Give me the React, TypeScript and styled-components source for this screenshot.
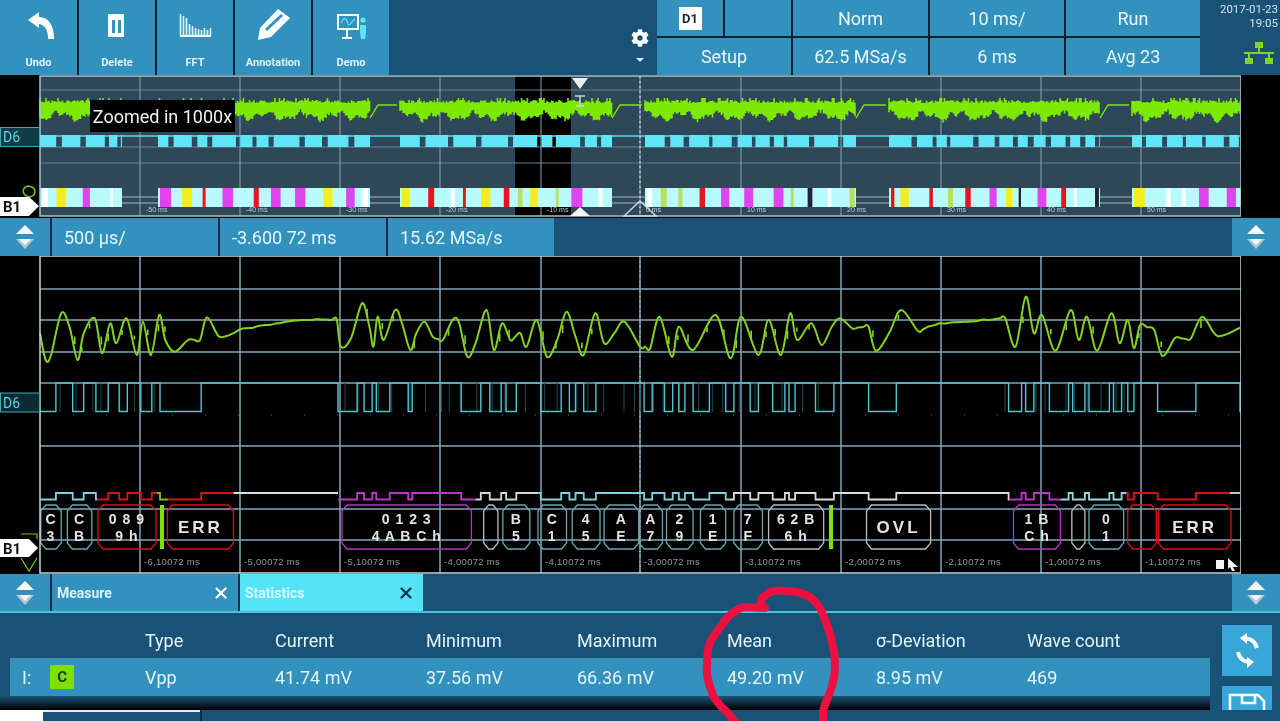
import React from "react";
import styled, { createGlobalStyle } from "styled-components";
import { FaCog } from "react-icons/fa";
import { X } from "lucide-react";

const BLUE = "#3391be";
const DARK = "#1a5277";
const CYAN = "#55e3f7";

const GlobalStyle = createGlobalStyle`
  html, body {
    margin: 0;
    padding: 0;
    background: #000;
  }
  body {
    font-family: "Roboto", "Liberation Sans", sans-serif;
  }
`;

const Page = styled.div`
  position: relative;
  width: 1280px;
  height: 721px;
  overflow: hidden;
  display: flex;
  flex-direction: column;
  background: #000;
  color: #e4f4fa;
  filter: blur(0.6px);
`;

/* top bar */
const TopBar = styled.header`
  height: 75px;
  display: flex;
  background: ${DARK};
`;

const ToolGroup = styled.div`
  display: flex;
  gap: 2px;
  background: #06202f;
`;

const ToolButton = styled.button`
  width: 76px;
  height: 75px;
  padding: 0;
  border: 0;
  display: flex;
  flex-direction: column;
  align-items: center;
  background: ${BLUE};
  color: #dff3fa;
  font-family: inherit;
  font-size: 11px;
  font-weight: 700;
  &:first-child {
    width: 77px;
  }
  svg {
    flex: none;
  }
  span {
    margin-top: 10px;
    line-height: 16px;
  }
`;

const GearArea = styled.div`
  flex: 1;
  display: flex;
  flex-direction: column;
  align-items: flex-end;
  padding: 29px 8px 0 0;
  color: #fff;
  font-size: 18px;
`;

const GearNotch = styled.i`
  display: block;
  margin: 11px 5px 0 0;
  border-left: 4px solid transparent;
  border-right: 4px solid transparent;
  border-top: 4px solid #d6e6ee;
`;

const ControlGrid = styled.div`
  flex: none;
  width: 543px;
  display: grid;
  grid-template-columns: 66px 66px 135px 134px 134px;
  grid-template-rows: 36px 37px;
  gap: 2px;
  background: #06202f;
`;

const ControlCell = styled.div<{ $span?: number }>`
  grid-column: span ${(p) => p.$span ?? 1};
  display: flex;
  align-items: center;
  justify-content: center;
  background: ${BLUE};
  font-size: 18px;
  color: #e8f6fb;
`;

const ChannelChip = styled.span`
  width: 23px;
  height: 23px;
  display: flex;
  align-items: center;
  justify-content: center;
  background: #fff;
  color: #1a2a33;
  font-size: 13px;
  font-weight: 700;
`;

const Clock = styled.div`
  flex: none;
  width: 78px;
  margin-left: 2px;
  box-sizing: border-box;
  display: flex;
  flex-direction: column;
  align-items: flex-end;
  padding: 2px 2px 0 0;
  font-size: 11.5px;
  line-height: 14px;
  color: #cfe4ee;
  svg {
    margin: 12px 3px 0 0;
  }
`;

/* plots */
const PlotRow = styled.section<{ $height: number }>`
  position: relative;
  height: ${(p) => p.$height}px;
  display: flex;
  background: #000;
  svg {
    display: block;
  }
`;

const ZoomTip = styled.div`
  position: absolute;
  left: 90px;
  top: 25px;
  width: 145px;
  height: 32px;
  display: flex;
  align-items: center;
  justify-content: center;
  background: #000;
  color: #f2f2f2;
  font-size: 18px;
  white-space: nowrap;
`;

const TraceLabel = styled.text`
  font-family: "Roboto", "Liberation Sans", sans-serif;
  font-size: 14px;
  fill: #58d4e4;
`;

const BusLabel = styled.text`
  font-family: "Roboto", "Liberation Sans", sans-serif;
  font-size: 15px;
  font-weight: 700;
  fill: #111;
`;

const TinyTime = styled.text`
  font-family: "Liberation Sans", sans-serif;
  font-size: 7px;
  fill: #c0d0d8;
`;

const TimeLabel = styled.text`
  font-family: "Liberation Sans", sans-serif;
  font-size: 9.5px;
  letter-spacing: 0.3px;
  fill: #8f9a9f;
`;

const FrameText = styled.text<{ $big?: boolean }>`
  font-family: "Liberation Sans", sans-serif;
  font-size: ${(p) => (p.$big ? 17 : 14)}px;
  font-weight: 700;
  letter-spacing: ${(p) => (p.$big ? 3 : 1)}px;
  text-anchor: middle;
  fill: #e4e4e4;
`;

/* bars between plots */
const StripBar = styled.div<{ $height: number }>`
  height: ${(p) => p.$height}px;
  display: flex;
  background: ${DARK};
`;

const ArrowCell = styled.div<{ $side?: "left" | "right" }>`
  width: ${(p) => (p.$side === "right" ? 48 : 50)}px;
  margin-left: ${(p) => (p.$side === "right" ? "auto" : 0)};
  display: flex;
  align-items: center;
  justify-content: center;
  background: ${BLUE};
`;

const TimeCell = styled.div`
  width: 166px;
  margin-left: 2px;
  padding-left: 12px;
  box-sizing: border-box;
  display: flex;
  align-items: center;
  background: ${BLUE};
  box-shadow: -2px 0 0 #0a2c40;
  font-size: 18px;
  color: #e4f4fa;
`;

const Tab = styled.div<{ $active?: boolean }>`
  width: ${(p) => (p.$active ? 183 : 186)}px;
  margin-left: 2px;
  padding: 0 8px 0 5px;
  box-sizing: border-box;
  display: flex;
  align-items: center;
  justify-content: space-between;
  background: ${(p) => (p.$active ? CYAN : BLUE)};
  box-shadow: -2px 0 0 #0a2c40;
  color: ${(p) => (p.$active ? "#d8fbff" : "#dcf2fa")};
  font-size: 14px;
  font-weight: 700;
  svg {
    color: ${(p) => (p.$active ? "#0c3550" : "#fff")};
  }
`;

/* statistics */
const StatsPanel = styled.section`
  height: 99px;
  display: flex;
  border-top: 2px solid #48c4dc;
  box-sizing: border-box;
  background: ${DARK};
`;

const StatsTable = styled.div`
  position: relative;
  width: 1210px;
  padding: 0 0 0 10px;
  box-sizing: border-box;
  &::after {
    content: "";
    position: absolute;
    left: 0;
    right: 0;
    bottom: 0;
    height: 14px;
    background: linear-gradient(#1a5277, #000);
  }
`;

const StatsRow = styled.div<{ $value?: boolean }>`
  height: ${(p) => (p.$value ? 38 : 45)}px;
  display: grid;
  grid-template-columns: 135px 130px 151px 151px 150px 149px 151px 183px;
  align-items: center;
  padding-top: ${(p) => (p.$value ? 0 : 9)}px;
  box-sizing: border-box;
  background: ${(p) => (p.$value ? BLUE : "transparent")};
  font-size: 18px;
  color: #e4f4fa;
`;

const RowKey = styled.div`
  display: flex;
  align-items: center;
  gap: 19px;
  padding-left: 12px;
`;

const SourceBadge = styled.span`
  width: 24px;
  height: 24px;
  display: flex;
  align-items: center;
  justify-content: center;
  background: #7fe000;
  color: #1a3a10;
  font-size: 15px;
  font-weight: 700;
`;

const SideButtons = styled.div`
  flex: 1;
  display: flex;
  flex-direction: column;
  gap: 10px;
  padding: 12px 0 0 12px;
  overflow: hidden;
`;

const SideButton = styled.button`
  flex: none;
  width: 50px;
  height: 51px;
  padding: 0;
  border: 0;
  display: flex;
  align-items: flex-start;
  justify-content: center;
  background: #38a6d6;
`;

const BottomStrip = styled.footer`
  flex: 1;
  display: flex;
  background: ${DARK};
`;

const StripEnd = styled.div`
  width: 43px;
  background: #fff;
`;

const StripTab = styled.div`
  width: 157px;
  border-top: 2px solid #e8eef0;
  box-sizing: border-box;
  box-shadow: 2px 0 0 #0a2c40;
`;

const RedMark = styled.svg`
  position: absolute;
  left: 0;
  top: 0;
  pointer-events: none;
`;

/* trace data */
type Range = [number, number];

const L = (x: number) => x / 2.45;
const R = (x: number) => 640 + x / 2.45;

function makeRandom(seed: number) {
  let s = seed;
  return () => {
    s = (s * 9301 + 49297) % 233280;
    return s / 233280;
  };
}

const bursts: Range[] = [
  [40, 122],
  [158, 370],
  [400, 612],
  [645, 856],
  [889, 1100],
  [1132, 1241],
];

const overviewGreen = (() => {
  const rnd = makeRandom(17);
  let d = "";
  for (const [a, b] of bursts) {
    for (let x = a; x < b; x += 1.5) {
      const hump = Math.sin(x / 5.5) + 0.7 * Math.sin(x / 2.3);
      const top = 103 - (rnd() > 0.88 ? 5 : rnd() * 3);
      const low = 114 + hump * 3 + rnd() * 4;
      d += `M${x} ${top.toFixed(1)}V${low.toFixed(1)}`;
    }
  }
  return d;
})();

const overviewGaps: Range[] = [
  [122, 158],
  [370, 400],
  [612, 645],
  [856, 889],
  [1100, 1132],
];

const cyanBlocks = (() => {
  const rnd = makeRandom(5);
  const out: Range[] = [];
  for (const [a, b] of bursts) {
    let x = a;
    while (x < b) {
      const w = 8 + rnd() * 20;
      out.push([x, Math.min(x + w, b)]);
      x += w + 3 + rnd() * 3;
    }
  }
  return out;
})();

const busStripes = (() => {
  const rnd = makeRandom(41);
  const out: { x: number; w: number; c: string }[] = [];
  for (const [a, b] of bursts) {
    let x = a + 2;
    while (x < b - 3) {
      const t = rnd();
      const c = t < 0.3 ? "#e044f0" : t < 0.5 ? "#e8141c" : t < 0.6 ? "#f4ec1c" : t < 0.68 ? "#b8e060" : t < 0.74 ? "#223" : "#fff";
      const w = c === "#e044f0" || c === "#f4ec1c" ? 6 + rnd() * 6 : 2 + rnd() * 4;
      out.push({ x, w: Math.min(w, b - x), c });
      x += w + 6 + rnd() * 16;
    }
  }
  return out;
})();

const greenLeft: Range[] = [
  [98, 220], [112, 300], [125, 285], [150, 160], [170, 200], [190, 300], [205, 220], [232, 175], [250, 280], [270, 190],
  [285, 250], [310, 175], [335, 285], [350, 185], [370, 285], [390, 165], [405, 240], [428, 275], [460, 240], [490, 240],
  [507, 172], [535, 228], [555, 228], [590, 207], [650, 195], [700, 185], [760, 180], [825, 178], [835, 260], [860, 235],
  [887, 130], [905, 200], [915, 260], [925, 170], [940, 240], [968, 150], [985, 190], [1005, 270], [1020, 220], [1040, 185],
  [1060, 230], [1085, 240], [1110, 178], [1125, 190], [1145, 290], [1165, 250], [1192, 150], [1210, 270], [1230, 190], [1250, 240],
  [1275, 220], [1290, 260], [1315, 180], [1340, 290], [1365, 240], [1388, 155], [1410, 230], [1430, 285], [1458, 160], [1480, 250],
  [1505, 220], [1530, 185], [1568, 260],
];

const greenRight: Range[] = [
  [25, 265], [48, 170], [78, 290], [95, 200], [130, 270], [185, 165], [222, 295], [248, 170], [290, 285], [315, 180],
  [345, 285], [368, 160], [385, 240], [420, 190], [445, 255], [470, 200], [490, 175], [520, 205], [560, 200], [578, 272],
  [610, 220], [640, 150], [680, 212], [735, 190], [800, 185], [895, 175], [920, 260], [945, 110], [965, 220], [985, 165],
  [1018, 272], [1055, 150], [1075, 240], [1095, 170], [1120, 272], [1155, 160], [1175, 250], [1195, 180], [1210, 265], [1225, 195],
  [1260, 210], [1280, 288], [1310, 235], [1350, 235], [1378, 170], [1415, 228], [1470, 203],
];

const greenRaw: Range[] = [
  ...greenLeft.map(([x, y]): Range => [L(x), 260 + y / 3]),
  ...greenRight.map(([x, y]): Range => [R(x), 260 + y / 3]),
];

// catmull-rom through the read-off peaks so they keep their height, ripple on the flat stretches
const greenTrace = (() => {
  const rnd = makeRandom(29);
  const pts: Range[] = [];
  greenRaw.forEach(([x, y], i) => {
    pts.push([x, y]);
    const next = greenRaw[i + 1];
    if (next && Math.abs(next[1] - y) < 8) {
      const n = Math.floor((next[0] - x) / 5);
      for (let k = 1; k < n; k++) {
        pts.push([x + ((next[0] - x) * k) / n, y + ((next[1] - y) * k) / n + (rnd() - 0.5) * 1.4]);
      }
    }
  });
  let d = `M${pts[0][0].toFixed(1)} ${pts[0][1].toFixed(1)}`;
  for (let i = 0; i < pts.length - 1; i++) {
    const p0 = pts[Math.max(i - 1, 0)];
    const p1 = pts[i];
    const p2 = pts[i + 1];
    const p3 = pts[Math.min(i + 2, pts.length - 1)];
    const c1x = p1[0] + (p2[0] - p0[0]) / 6;
    const c1y = p1[1] + (p2[1] - p0[1]) / 6;
    const c2x = p2[0] - (p3[0] - p1[0]) / 6;
    const c2y = p2[1] - (p3[1] - p1[1]) / 6;
    d += `C${c1x.toFixed(1)} ${c1y.toFixed(1)} ${c2x.toFixed(1)} ${c2y.toFixed(1)} ${p2[0].toFixed(1)} ${p2[1].toFixed(1)}`;
  }
  return d;
})();

// short broken strokes that sit beside the steep slopes of the trace
const greenSpecks = (() => {
  const rnd = makeRandom(77);
  let d = "";
  greenRaw.forEach(([x, y], i) => {
    const next = greenRaw[i + 1];
    if (!next || Math.abs(next[1] - y) < 14 || rnd() < 0.35) return;
    const t = 0.3 + rnd() * 0.4;
    const sx = x + (next[0] - x) * t + 2;
    const sy = y + (next[1] - y) * t;
    d += `M${sx.toFixed(1)} ${(sy - 4).toFixed(1)}v${(4 + rnd() * 5).toFixed(1)}`;
  });
  return d;
})();

const dimPulses = (() => {
  const rnd = makeRandom(61);
  const busy: Range[] = [[60, 165], [345, 640], [640, 830], [1005, 1125]];
  let d = "";
  for (const [a, b] of busy) {
    for (let x = a; x < b; x += 7 + rnd() * 14) {
      d += `M${x.toFixed(1)} 383V412`;
    }
  }
  return d;
})();

const highs: Range[] = [
  ...([
    [137, 178], [205, 235], [265, 292], [312, 345], [372, 392], [493, 828], [875, 892], [912, 922], [955, 1000], [1010, 1130],
    [1178, 1200], [1228, 1240], [1265, 1325], [1375, 1395], [1410, 1430], [1460, 1568],
  ] as Range[]).map(([a, b]): Range => [L(a), L(b)]),
  ...([
    [0, 10], [30, 60], [80, 95], [110, 130], [170, 210], [230, 270], [290, 325], [355, 365], [380, 430], [475, 560],
    [628, 903], [935, 945], [965, 1003], [1050, 1060], [1090, 1100], [1150, 1160], [1180, 1195], [1210, 1268], [1362, 1470],
  ] as Range[]).map(([a, b]): Range => [R(a), R(b)]),
];

function digitalPath(hi: number, lo: number, from: number, to: number) {
  const level = (x: number) => highs.some(([a, b]) => x >= a && x < b);
  let up = level(from);
  let d = `M${from.toFixed(1)} ${up ? hi : lo}`;
  for (const [a, b] of highs) {
    for (const e of [a, b]) {
      if (e > from && e < to && level(e) !== up) {
        up = !up;
        d += `H${e.toFixed(1)}V${up ? hi : lo}`;
      }
    }
  }
  return `${d}H${to.toFixed(1)}`;
}

const busColors: { from: number; to: number; color: string }[] = [
  { from: 40, to: L(238), color: "#7fd2dc" },
  { from: L(238), to: L(385), color: "#e01018" },
  { from: L(385), to: L(412), color: "#8ab820" },
  { from: L(412), to: L(572), color: "#e01018" },
  { from: L(572), to: L(828), color: "#d8e0e0" },
  { from: L(828), to: L(1165), color: "#c034c8" },
  { from: L(1165), to: L(1320), color: "#d0d8d8" },
  { from: L(1320), to: R(220), color: "#7fd2dc" },
  { from: R(220), to: R(905), color: "#d8dcdc" },
  { from: R(905), to: R(1030), color: "#c034c8" },
  { from: R(1030), to: R(1192), color: "#9ad8dc" },
  { from: R(1192), to: R(1445), color: "#e01018" },
  { from: R(1445), to: R(1470), color: "#d8dcdc" },
];

type Frame = { a: number; b: number; top?: string; bottom?: string; big?: string; color: string };

const TEAL = "#6aa6ac";
const RED = "#d81018";
const MAGENTA = "#b438b8";
const GREY = "#b8bcbc";

const frames: Frame[] = [
  { a: L(100), b: L(150), top: "C", bottom: "3", color: TEAL },
  { a: L(165), b: L(225), top: "C", bottom: "B", color: TEAL },
  { a: L(240), b: L(382), top: "0 8 9", bottom: "9 h", color: RED },
  { a: L(410), b: L(572), big: "ERR", color: RED },
  { a: L(838), b: L(1155), top: "0 1 2 3", bottom: "4 A B C h", color: MAGENTA },
  { a: L(1185), b: L(1220), color: GREY },
  { a: L(1232), b: L(1298), top: "B", bottom: "5", color: TEAL },
  { a: L(1318), b: L(1388), top: "C", bottom: "1", color: TEAL },
  { a: L(1402), b: L(1470), top: "4", bottom: "5", color: TEAL },
  { a: L(1480), b: L(1565), top: "A", bottom: "E", color: TEAL },
  { a: R(-2), b: R(55), top: "A", bottom: "7", color: TEAL },
  { a: R(65), b: R(130), top: "2", bottom: "9", color: TEAL },
  { a: R(148), b: R(210), top: "1", bottom: "E", color: TEAL },
  { a: R(230), b: R(300), top: "7", bottom: "F", color: TEAL },
  { a: R(315), b: R(450), top: "6 2 B", bottom: "6 h", color: GREY },
  { a: R(555), b: R(712), big: "OVL", color: GREY },
  { a: R(915), b: R(1030), top: "1 B", bottom: "C h", color: MAGENTA },
  { a: R(1058), b: R(1090), color: GREY },
  { a: R(1100), b: R(1185), top: "0", bottom: "1", color: TEAL },
  { a: R(1195), b: R(1265), color: RED },
  { a: R(1270), b: R(1448), big: "ERR", color: RED },
];

const gridX = [140, 240, 340, 440, 541, 640, 741, 841, 941, 1041, 1141];
const overviewTimes = ["-50", "-40", "-30", "-20", "-10", "0", "10", "20", "30", "40", "50"];
const mainTimes = [
  "-6,10072", "-5,00072", "-5,10072", "-4,00072", "-4,10072", "-3,00072", "-3,10072", "-2,00072", "-2,10072", "-1,00072", "-1,10072",
];

function Arrows() {
  return (
    <svg width="20" height="26" viewBox="0 0 20 26">
      <path d="M10 1 L19 10 H1 Z" fill="#f4f8fa" />
      <path d="M5 10 H15 L19 10 H1 Z" fill="#8fa8b4" />
      <path d="M1 15 H19 L10 25 Z" fill="#b8c8d0" />
      <path d="M4 15 H16 L10 21 Z" fill="#f0f6f8" />
    </svg>
  );
}

function Overview() {
  return (
    <PlotRow $height={143}>
      <svg width="1241" height="143" viewBox="0 75 1241 143">
        <rect x="40" y="76" width="1201" height="140" fill="#2e4759" />
        <rect x="515" y="76" width="56" height="140" fill="#000" />
        {[90, 163].map((y) => (
          <line key={y} x1="40" x2="1241" y1={y} y2={y} stroke="#62808f" strokeWidth="1" />
        ))}
        {gridX.map((x) => (
          <line key={x} x1={x} x2={x} y1="76" y2="216" stroke="#8ba6b4" strokeWidth="1" />
        ))}
        <path d={overviewGreen} stroke="#7de800" strokeWidth="1.6" fill="none" />
        {overviewGaps.map(([a, b]) => (
          <path key={a} d={`M${a} 118 L${a + 8} 105 H${b - 3}`} stroke="#7de800" strokeWidth="1.4" fill="none" />
        ))}
        <line x1="40" x2="1241" y1="136" y2="136" stroke="#55dcec" strokeWidth="1.4" />
        <line x1="40" x2="1241" y1="147" y2="147" stroke="#6a8c9a" strokeWidth="1" />
        {cyanBlocks.map(([a, b]) => (
          <rect key={a} x={a} y="135" width={b - a} height="12" fill="#5ee6f6" />
        ))}
        {[197, 203].map((y) => (
          <line key={y} x1="40" x2="1241" y1={y} y2={y} stroke="#a8b8c0" strokeWidth="1" />
        ))}
        {bursts.map(([a, b]) => (
          <rect key={a} x={a} y="188" width={b - a} height="19" fill="#b8fafd" />
        ))}
        {busStripes.map((s) => (
          <rect key={s.x} x={s.x} y="188" width={s.w} height="19" fill={s.c} />
        ))}
        {gridX.map((x, i) => (
          <TinyTime key={x} x={x + 6} y="212">
            {overviewTimes[i]} ms
          </TinyTime>
        ))}
        <line x1="640" x2="640" y1="76" y2="216" stroke="#dfe8ec" strokeWidth="1" strokeDasharray="2 3" />
        <rect x="40" y="76" width="1201" height="140" fill="none" stroke="#a8c4d2" strokeWidth="1.5" />
        <path d="M572 78 H588 L580 89 Z" fill="#e8f0f2" />
        <path d="M575 96 H585 M580 96 V106 M576 106 H584" stroke="#c8d4d8" strokeWidth="1.5" fill="none" />
        <path d="M570 216 L580 207 L590 216 Z" fill="#f4f8f8" />
        <path d="M624 216 L640 201 L656 216 Z" fill="none" stroke="#c8d8de" strokeWidth="1.5" />
        <rect x="0.5" y="127.5" width="39" height="19" fill="#123c48" stroke="#3ea8b8" />
        <TraceLabel x="3" y="142">D6</TraceLabel>
        <path d="M28 186 C21 188 22 196 30 197 C37 195 37 187 28 186 Z" fill="none" stroke="#78c820" strokeWidth="1.5" />
        <path d="M0 197 H29 L39 206 L29 216 H0 Z" fill="#fff" />
        <BusLabel x="3" y="212">B1</BusLabel>
      </svg>
      <ZoomTip>Zoomed in 1000x</ZoomTip>
    </PlotRow>
  );
}

function MainPlot() {
  return (
    <PlotRow $height={318}>
      <svg width="1241" height="318" viewBox="0 256 1241 318">
        {[289, 320, 352, 383, 446, 509, 540].map((y) => (
          <line key={y} x1="40" x2="1241" y1={y} y2={y} stroke="#7fa9ba" strokeWidth="1.5" />
        ))}
        {gridX.map((x) => (
          <line key={x} x1={x} x2={x} y1="256" y2="573" stroke="#7fa9ba" strokeWidth="1.5" />
        ))}
        <line x1="640" x2="640" y1="256" y2="573" stroke="#dfe8ec" strokeWidth="1" strokeDasharray="1 4" />
        <path d={greenTrace} fill="none" stroke="#86d020" strokeWidth="2" strokeLinejoin="round" />
        <path d={greenSpecks} fill="none" stroke="#86d020" strokeWidth="1.6" />
        <line x1="40" x2="1241" y1="415" y2="415" stroke="#5a7a84" strokeWidth="1" strokeDasharray="1 32" />
        <path d={dimPulses} fill="none" stroke="#1c4a54" strokeWidth="1" />
        <path d={digitalPath(383, 411.5, 40, 1241)} fill="none" stroke="#52c4d2" strokeWidth="1.4" />
        {busColors.map((s) => (
          <path key={s.from} d={digitalPath(493, 499.5, s.from, s.to)} fill="none" stroke={s.color} strokeWidth="1.8" />
        ))}
        {frames.map((f) => (
          <g key={f.a}>
            <path
              d={`M${f.a + 5} 505 H${f.b - 5} L${f.b} 511 V543 L${f.b - 5} 549 H${f.a + 5} L${f.a} 543 V511 Z`}
              fill="none"
              stroke={f.color}
              strokeWidth="1.3"
            />
            {f.top && <FrameText x={(f.a + f.b) / 2} y="524">{f.top}</FrameText>}
            {f.bottom && <FrameText x={(f.a + f.b) / 2} y="541">{f.bottom}</FrameText>}
            {f.big && <FrameText $big x={(f.a + f.b) / 2} y="533">{f.big}</FrameText>}
          </g>
        ))}
        <rect x="160" y="505" width="4" height="44" fill="#80e000" />
        <rect x="829" y="505" width="4" height="44" fill="#80e000" />
        {gridX.map((x, i) => (
          <TimeLabel key={x} x={x + 4} y="565">
            {mainTimes[i]} ms
          </TimeLabel>
        ))}
        <path d="M1216 560 H1224 V569 H1216 Z M1228 558 L1238 567 L1233 567 L1235 571 L1232 571 L1230 567 L1228 569 Z" fill="#f4f4f4" />
        <rect x="40" y="256" width="1201" height="317" fill="none" stroke="#c4d8e0" strokeWidth="1.5" />
        <rect x="0.5" y="393" width="39" height="19" fill="#0c2a32" stroke="#3ea8b8" />
        <TraceLabel x="3" y="408">D6</TraceLabel>
        <path d="M21 534 H37 V539 M21 558 L29 571 L37 558" fill="none" stroke="#78c820" strokeWidth="1.2" />
        <path d="M0 539 H29 L38 548 L29 557 H0 Z" fill="#fff" />
        <BusLabel x="3" y="554">B1</BusLabel>
      </svg>
    </PlotRow>
  );
}

export default function App() {
  return (
    <Page>
      <GlobalStyle />
      <TopBar>
        <ToolGroup>
          <ToolButton>
            <svg width="76" height="45" viewBox="0 0 76 45">
              <path d="M27 20 L38 12 V17 C48 17 53 26 53 39 H47 C47 30 44 25 38 24 V28 Z" fill="#fff" />
            </svg>
            <span>Undo</span>
          </ToolButton>
          <ToolButton>
            <svg width="76" height="45" viewBox="0 0 76 45">
              <rect x="29" y="14" width="16" height="23" fill="#fff" />
              <rect x="33" y="20" width="3" height="13" fill={BLUE} />
              <rect x="39" y="20" width="3" height="13" fill={BLUE} />
            </svg>
            <span>Delete</span>
          </ToolButton>
          <ToolButton>
            <svg width="76" height="45" viewBox="0 0 76 45">
              <path
                d="M23.5 36V14M26.5 36V16M29.5 36V18M32.5 36V24M35.5 36V26M38.5 36V28M41.5 36V29M44.5 36V30M47.5 36V28M50.5 36V30M53.5 36V28"
                stroke="#e8f8fc"
                strokeWidth="1.6"
              />
              <path d="M23 36H54" stroke="#fff" strokeWidth="2" />
            </svg>
            <span>FFT</span>
          </ToolButton>
          <ToolButton>
            <svg width="76" height="45" viewBox="0 0 76 45">
              <path d="M23 40 L25 28 L43 9 L55 18 L36 37 Z" fill="#fff" />
              <path d="M31 30 L47 15" stroke={BLUE} strokeWidth="3" />
            </svg>
            <span>Annotation</span>
          </ToolButton>
          <ToolButton>
            <svg width="76" height="45" viewBox="0 0 76 45">
              <rect x="25" y="15" width="20" height="14" fill="none" stroke="#fff" strokeWidth="2" />
              <path d="M28 23 C31 17 33 17 35 24 C37 27 39 20 42 19" fill="none" stroke="#5ee6f6" strokeWidth="1.2" />
              <path d="M34 29 V37 M29 38 H39" stroke="#fff" strokeWidth="2" />
              <circle cx="50" cy="20" r="2.6" fill="#5ee6f6" />
              <path d="M47 25 H53 V32 L52 39 H48 L47 32 Z" fill="#5ee6f6" />
            </svg>
            <span>Demo</span>
          </ToolButton>
        </ToolGroup>
        <GearArea>
          <FaCog />
          <GearNotch />
        </GearArea>
        <ControlGrid>
          <ControlCell>
            <ChannelChip>D1</ChannelChip>
          </ControlCell>
          <ControlCell />
          <ControlCell>Norm</ControlCell>
          <ControlCell>10 ms/</ControlCell>
          <ControlCell>Run</ControlCell>
          <ControlCell $span={2}>Setup</ControlCell>
          <ControlCell>62.5 MSa/s</ControlCell>
          <ControlCell>6 ms</ControlCell>
          <ControlCell>Avg 23</ControlCell>
        </ControlGrid>
        <Clock>
          <div>2017-01-23</div>
          <div>19:05</div>
          <svg width="32" height="23" viewBox="0 0 32 23">
            <rect x="12" y="0" width="8" height="6" fill="#86d41c" />
            <path d="M16 6 V11 M1 11 H31 M6 11 V16 M26 11 V16" stroke="#86d41c" strokeWidth="2" />
            <rect x="2" y="16" width="8" height="6" fill="#86d41c" />
            <rect x="22" y="16" width="8" height="6" fill="#86d41c" />
          </svg>
        </Clock>
      </TopBar>

      <Overview />

      <StripBar $height={38}>
        <ArrowCell $side="left">
          <Arrows />
        </ArrowCell>
        <TimeCell>500 µs/</TimeCell>
        <TimeCell>-3.600 72 ms</TimeCell>
        <TimeCell>15.62 MSa/s</TimeCell>
        <ArrowCell $side="right">
          <Arrows />
        </ArrowCell>
      </StripBar>

      <MainPlot />

      <StripBar $height={37}>
        <ArrowCell $side="left">
          <Arrows />
        </ArrowCell>
        <Tab>
          Measure
          <X size={18} strokeWidth={3} />
        </Tab>
        <Tab $active>
          Statistics
          <X size={18} strokeWidth={3} />
        </Tab>
        <ArrowCell $side="right">
          <Arrows />
        </ArrowCell>
      </StripBar>

      <StatsPanel>
        <StatsTable>
          <StatsRow>
            <div />
            <div>Type</div>
            <div>Current</div>
            <div>Minimum</div>
            <div>Maximum</div>
            <div>Mean</div>
            <div>σ-Deviation</div>
            <div>Wave count</div>
          </StatsRow>
          <StatsRow $value>
            <RowKey>
              I:
              <SourceBadge>C</SourceBadge>
            </RowKey>
            <div>Vpp</div>
            <div>41.74 mV</div>
            <div>37.56 mV</div>
            <div>66.36 mV</div>
            <div>49.20 mV</div>
            <div>8.95 mV</div>
            <div>469</div>
          </StatsRow>
        </StatsTable>
        <SideButtons>
          <SideButton>
            <svg width="50" height="51" viewBox="0 0 50 51">
              <path d="M23 14 C29 13 33 17 35 23" fill="none" stroke="#fff" strokeWidth="4" />
              <path d="M18 13 L25 8 V19 Z" fill="#fff" />
              <path d="M16 27 C17 33 22 37 27 37" fill="none" stroke="#fff" strokeWidth="4" />
              <path d="M32 37 L25 32 V43 Z" fill="#fff" />
            </svg>
          </SideButton>
          <SideButton>
            <svg width="50" height="51" viewBox="0 0 50 51">
              <path d="M8 41 V9 H36 L42 15 V41" fill="none" stroke="#fff" strokeWidth="2.5" />
              <path d="M20 9 V17 H33 V9" fill="none" stroke="#fff" strokeWidth="2.5" />
            </svg>
          </SideButton>
        </SideButtons>
      </StatsPanel>

      <BottomStrip>
        <StripEnd />
        <StripTab />
      </BottomStrip>

      <RedMark width="1280" height="721" viewBox="0 0 1280 721">
        <path
          d="M737 724 L727 712 C718 705 712 695 712 692 C707 680 706 672 707 665 C707 655 708 648 710 642 C716 632 721 626 727 618 C733 612 738 609 743 607 L765 608 C760 604 760 601 762 598 L770 592 C777 590 783 590 790 591 C798 592 805 594 810 597 C816 602 820 607 822 612 C826 622 830 632 832 642 C834 650 835 658 835 665 C835 675 833 684 830 692 C827 700 824 706 823 712 L823 724"
          fill="none"
          stroke="#ee1040"
          strokeWidth="8"
          strokeLinecap="round"
          strokeLinejoin="round"
        />
      </RedMark>
    </Page>
  );
}
